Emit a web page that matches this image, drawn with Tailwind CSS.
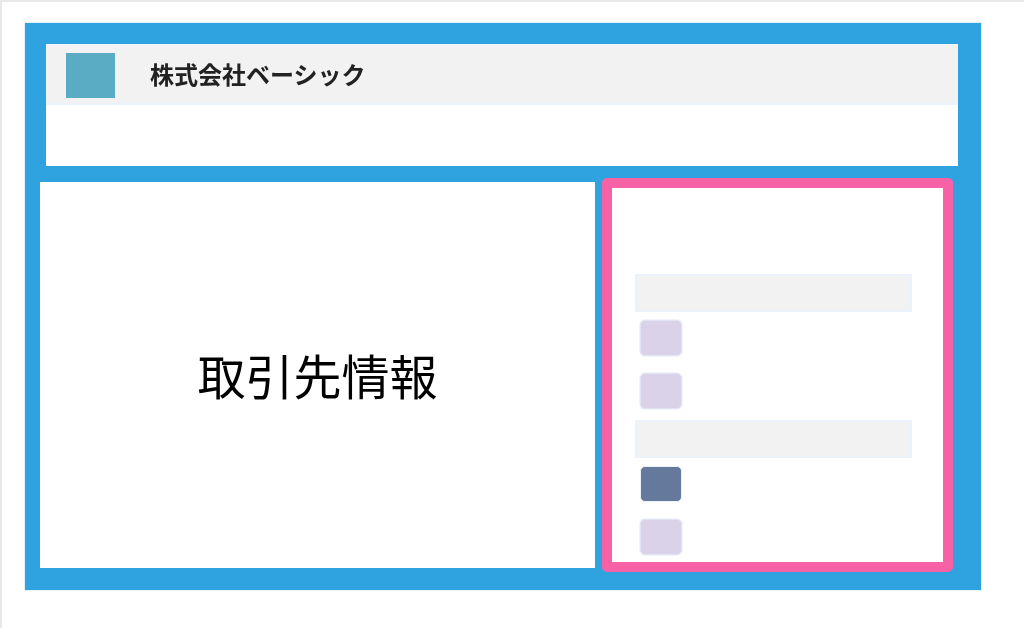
<!DOCTYPE html>
<html lang="ja">
<head>
    <meta charset="UTF-8">
    <title>取引先情報</title>
    <script src="https://cdn.jsdelivr.net/npm/@tailwindcss/browser@4"></script>
</head>
<body class="bg-white font-['Noto_Sans_CJK_JP','Noto_Sans',sans-serif]">
    <div class="h-[628px] w-[1024px] overflow-hidden border-l-2 border-t-2 border-[#e8e8e8] pl-[22px] pt-[20px] blur-[0.5px]">
        <!-- Blue frame -->
        <div class="h-[569px] w-[958px] border border-[#e6f0fa] bg-[#2ea3e0] pt-[21px]">
            <!-- Company header -->
            <div class="ml-[21px] h-[122px] w-[912px] bg-white">
                <div class="flex h-[61px] items-center border-b-2 border-[#ebf2fa] bg-[#f2f2f2] pl-[20px]">
                    <div class="mt-[4px] h-[45px] w-[49px] bg-[#59acc3]"></div>
                    <span class="ml-[35px] text-[24px] leading-none font-bold text-[#222222]">株式会社ベーシック</span>
                </div>
            </div>
            <div class="mt-[12px] flex items-center pl-[15px]">
                <!-- Main panel -->
                <div class="flex h-[386px] w-[555px] items-center justify-center bg-white">
                    <span class="mb-[2px] text-[48px] leading-none text-black">取引先情報</span>
                </div>
                <!-- Highlighted side panel -->
                <div class="ml-[7px] h-[394px] w-[351px] rounded-[5px] border-[10px] border-[#f762a6] bg-white pl-[23px] pt-[86px]">
                    <div class="h-[38px] w-[277px] border-2 border-[#ebf2fa] bg-[#f2f2f2]"></div>
                    <div class="ml-[5px] mt-[8px] h-[36px] w-[42px] rounded-[5px] border border-[#e2e4f3] bg-[#d9d2e9] shadow-[0_0_0_1px_#f0f5fb]"></div>
                    <div class="ml-[5px] mt-[17px] h-[36px] w-[42px] rounded-[5px] border border-[#e2e4f3] bg-[#d9d2e9] shadow-[0_0_0_1px_#f0f5fb]"></div>
                    <div class="mt-[11px] h-[38px] w-[277px] border-2 border-[#ebf2fa] bg-[#f2f2f2]"></div>
                    <div class="ml-[5px] mt-[8px] h-[36px] w-[42px] rounded-[5px] border border-[#ebf2fa] bg-[#64799b]"></div>
                    <div class="ml-[5px] mt-[17px] h-[36px] w-[42px] rounded-[5px] border border-[#e2e4f3] bg-[#d9d2e9] shadow-[0_0_0_1px_#f0f5fb]"></div>
                </div>
            </div>
        </div>
    </div>
</body>
</html>
